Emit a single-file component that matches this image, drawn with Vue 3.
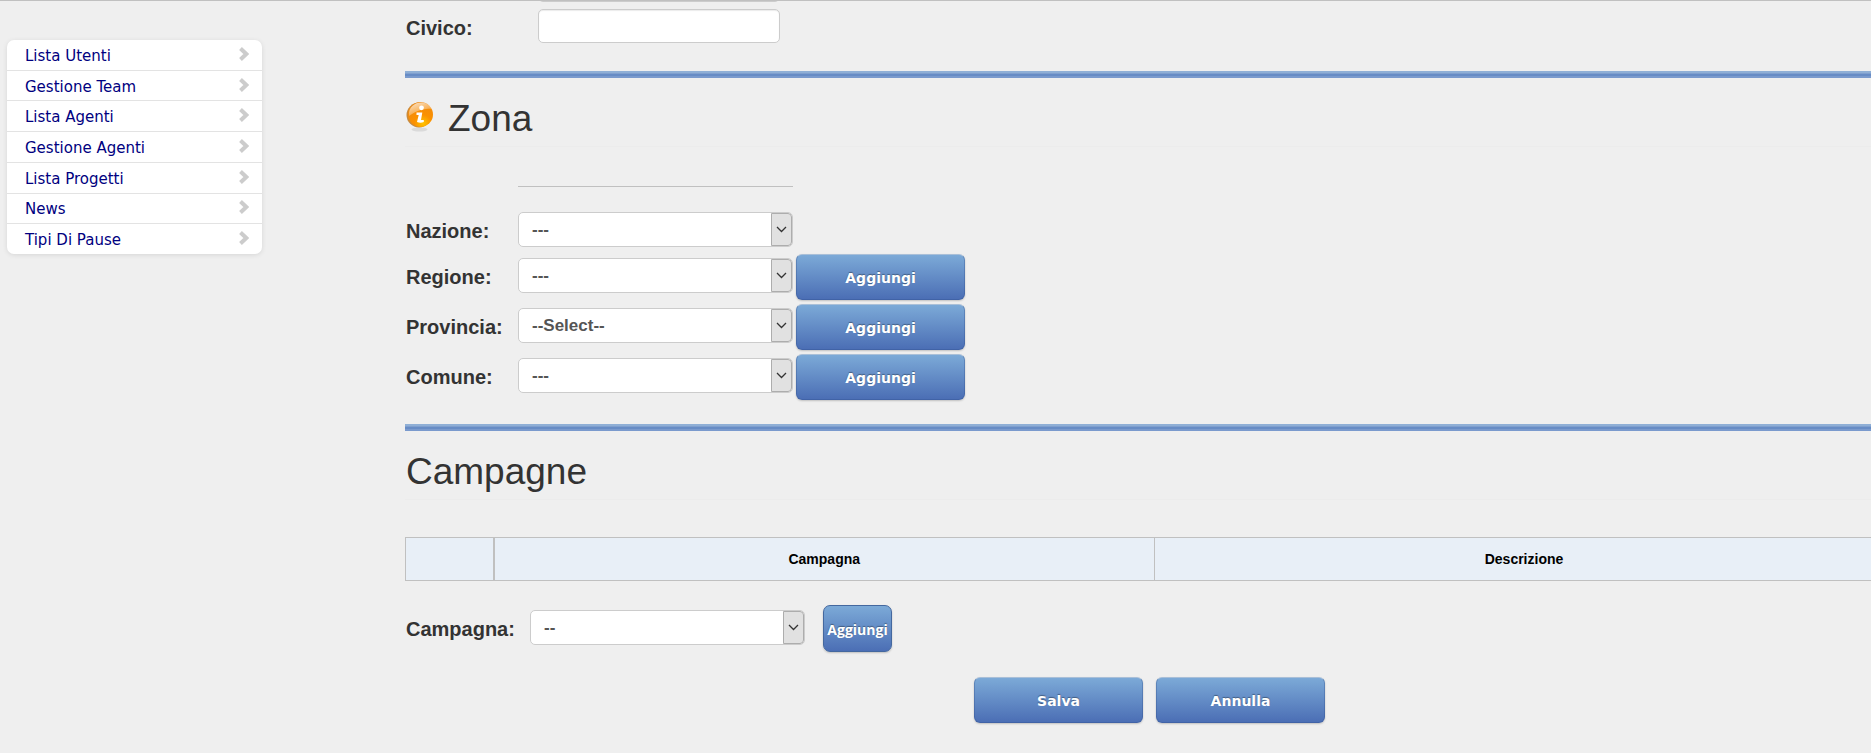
<template>
  <div class="page">
    <nav class="sidebar">
      <ul class="menu">
        <li v-for="item in menuItems" :key="item" class="menu-item">
          <a href="#" class="menu-link">
            {{ item }}
            <svg class="menu-arrow" viewBox="0 0 10 14" aria-hidden="true">
              <path d="M1.5 1.5 L7.3 7 L1.5 12.5" />
            </svg>
          </a>
        </li>
      </ul>
    </nav>

    <main class="content">
      <div class="clipped-row">
        <input v-model="indirizzo" class="text-input" type="text" aria-label="Indirizzo" />
      </div>
      <div class="form-row civico-row">
        <label class="label" for="civico">Civico:</label>
        <input id="civico" v-model="civico" class="text-input" type="text" />
      </div>

      <hr class="divider" />

      <h1 class="heading">
        <svg class="info-icon" viewBox="0 0 28 32" aria-hidden="true">
          <defs>
            <radialGradient id="orange" cx="0.6" cy="0.85" r="0.85">
              <stop offset="0" stop-color="#ffc400" />
              <stop offset="0.4" stop-color="#fb9100" />
              <stop offset="1" stop-color="#f08a10" />
            </radialGradient>
            <linearGradient id="shine" x1="0" y1="0" x2="0.6" y2="1">
              <stop offset="0" stop-color="#fff" stop-opacity="0.8" />
              <stop offset="1" stop-color="#fff" stop-opacity="0.1" />
            </linearGradient>
          </defs>
          <ellipse cx="13.5" cy="28.5" rx="8" ry="2" fill="#dadada" />
          <circle cx="13" cy="14" r="12.5" fill="#c98a3c" />
          <circle cx="14.5" cy="13.5" r="12.5" fill="url(#orange)" />
          <path d="M3 15 C2 6 9 1.5 15 1.5 C20 1.5 24 4 25.5 8 C18 7 10 10 3 15 Z" fill="url(#shine)" />
          <circle cx="15.5" cy="6.8" r="2.4" fill="#fff" />
          <path d="M10.5 11.5 H16.3 L15 19 H17.8 V21 Q14.5 22.5 11 21 L12.7 14 H10.5 Z" fill="#fff" />
        </svg>
        Zona
      </h1>

      <div class="zone-form">
        <div class="zone-line"></div>
        <div v-for="zone in zones" :key="zone.id" class="form-row">
          <label class="label zone-label" :for="zone.id">{{ zone.label }}</label>
          <span class="select-box">
            <select :id="zone.id" class="select">
              <option>{{ zone.value }}</option>
            </select>
            <svg class="select-arrow" viewBox="0 0 19 31" aria-hidden="true">
              <path d="M5 13 L9.5 17.5 L14 13" />
            </svg>
          </span>
          <button v-if="zone.canAdd" type="button" class="btn zone-btn">Aggiungi</button>
        </div>
      </div>

      <hr class="divider" />

      <h1 class="heading">Campagne</h1>

      <table class="table">
        <colgroup>
          <col class="col-action" />
          <col class="col-campaign" />
          <col />
        </colgroup>
        <thead>
          <tr>
            <th class="action-cell"></th>
            <th>Campagna</th>
            <th>Descrizione</th>
          </tr>
        </thead>
      </table>

      <div class="form-row campaign-row">
        <label class="label campaign-label" for="campagna">Campagna:</label>
        <span class="select-box">
          <select id="campagna" class="select">
            <option>--</option>
          </select>
          <svg class="select-arrow" viewBox="0 0 19 31" aria-hidden="true">
            <path d="M5 13 L9.5 17.5 L14 13" />
          </svg>
        </span>
        <button type="button" class="btn btn-small">Aggiungi</button>
      </div>

      <div class="actions">
        <button type="submit" class="btn">Salva</button>
        <button type="button" class="btn">Annulla</button>
      </div>
    </main>
  </div>
</template>

<script setup>
import { ref } from 'vue';

const indirizzo = ref('');
const civico = ref('');

const menuItems = [
  'Lista Utenti',
  'Gestione Team',
  'Lista Agenti',
  'Gestione Agenti',
  'Lista Progetti',
  'News',
  'Tipi Di Pause',
];

const zones = [
  { id: 'nazione', label: 'Nazione:', value: '---', canAdd: false },
  { id: 'regione', label: 'Regione:', value: '---', canAdd: true },
  { id: 'provincia', label: 'Provincia:', value: '--Select--', canAdd: true },
  { id: 'comune', label: 'Comune:', value: '---', canAdd: true },
];
</script>

<style>
body {
  background-color: #efefef;
}
</style>

<style scoped>
.page {
  display: flex;
  box-sizing: border-box;
  min-height: 100vh;
  overflow: hidden;
  border-top: 1px solid #c0c0c0;
  background-color: #efefef;
  color: #333;
  font-family: "Liberation Sans", Arial, sans-serif;
}

.sidebar {
  flex: none;
  width: 255px;
  padding: 39px 143px 0 7px;
}

.menu {
  display: grid;
  grid-auto-rows: 1fr;
  gap: 1px;
  height: 214px;
  margin: 0;
  padding: 0;
  overflow: hidden;
  list-style: none;
  border-radius: 7px;
  background-color: #e3e3e3;
  box-shadow: 0 1px 5px rgba(0, 0, 0, 0.1);
}

.menu-link {
  display: flex;
  align-items: center;
  justify-content: space-between;
  box-sizing: border-box;
  height: 100%;
  padding: 2px 13px 0 18px;
  background-color: #fff;
  color: #000080;
  font-family: Verdana, "DejaVu Sans", sans-serif;
  font-size: 15px;
  text-decoration: none;
}

.menu-arrow {
  width: 10px;
  height: 14px;
  margin-bottom: 4px;
  fill: none;
  stroke: #ccc;
  stroke-width: 4;
}

/* the form is slightly wider than the visible area */
.content {
  flex: 1;
  min-width: 0;
  margin-right: -23px;
}

.clipped-row {
  display: flex;
  align-items: flex-end;
  height: 1px;
  margin-left: 133px;
  overflow: hidden;
}

.form-row {
  display: flex;
  align-items: center;
}

.civico-row {
  margin-top: 7px;
}

.label {
  width: 132px;
  padding-left: 1px;
  font-size: 20px;
  font-weight: bold;
  line-height: 20px;
}

.zone-label {
  width: 112px;
}

.campaign-label {
  width: 124px;
}

.text-input {
  box-sizing: border-box;
  width: 242px;
  height: 34px;
  padding: 4px 12px;
  border: 1px solid #ccc;
  border-radius: 5px;
  background-color: #fff;
  color: #555;
  font-size: 18px;
  box-shadow: inset 0 1px 1px rgba(0, 0, 0, 0.08);
}

.civico-row .text-input {
  margin-bottom: 4px;
}

.divider {
  height: 7px;
  margin: 24px 0 0;
  border: 0;
  background: linear-gradient(#8fafd6 0 2px, #7f9fce 2px 3px, #678cc5 3px 5px, #7a9acd 5px 7px);
}

.heading {
  display: flex;
  align-items: center;
  gap: 14px;
  height: 54px;
  margin: 0;
  padding: 14px 0 0 1px;
  border-bottom: 1px solid #ececec;
  font-size: 37px;
  font-weight: normal;
  line-height: 40px;
}

.info-icon {
  width: 28px;
  height: 32px;
  margin-bottom: 4px;
}

.zone-form {
  display: flex;
  flex-direction: column;
  gap: 4px;
  padding-top: 39px;
}

.zone-line {
  width: 275px;
  height: 1px;
  margin: 0 0 21px 113px;
  background-color: #c0c0c0;
}

.select-box {
  position: relative;
  width: 275px;
  height: 35px;
  margin-bottom: 3px;
}

.select {
  box-sizing: border-box;
  width: 100%;
  height: 100%;
  padding: 0 34px 0 13px;
  appearance: none;
  border: 1px solid #ccc;
  border-radius: 5px;
  background-color: #fff;
  color: #555;
  font-family: inherit;
  font-size: 17px;
  font-weight: bold;
}

.select-arrow {
  position: absolute;
  top: 1px;
  right: 1px;
  box-sizing: border-box;
  width: 21px;
  height: 33px;
  border: 1px solid #adadad;
  border-radius: 0 4px 4px 0;
  background-color: #e1e1e1;
  fill: none;
  stroke: #333;
  stroke-width: 1.3;
  pointer-events: none;
}

.btn {
  width: 169px;
  height: 46px;
  padding: 1px 0 0;
  border: 1px solid rgba(50, 80, 140, 0.35);
  border-top-color: #a9bfd8;
  border-radius: 6px;
  background: linear-gradient(#7dabd8, #4a6db4) border-box;
  color: #fff;
  font-family: Verdana, "DejaVu Sans", sans-serif;
  font-size: 14px;
  font-weight: bold;
  text-shadow: 0 -1px 1px rgba(0, 0, 0, 0.35);
  box-shadow: 0 1px 2px rgba(0, 0, 0, 0.2);
  cursor: pointer;
}

.zone-btn {
  margin-left: 3px;
}

.btn-small {
  width: 69px;
  height: 47px;
  margin-left: 18px;
  border-color: #44689f;
  border-radius: 7px;
  font-family: "Open Sans", sans-serif;
}

.table {
  width: 100%;
  margin-top: 37px;
  border-collapse: collapse;
  table-layout: fixed;
}

.col-action {
  width: 88px;
}

.col-campaign {
  width: 661px;
}

.table th {
  height: 42px;
  padding: 0;
  border: 1px solid #c0c0c0;
  background-color: #e8eff7;
  color: #000;
  font-size: 14px;
}

.table .action-cell {
  border-right-width: 2px;
}

.campaign-row {
  margin-top: 24px;
}

.actions {
  display: flex;
  justify-content: center;
  gap: 13px;
  margin-top: 25px;
}
</style>
